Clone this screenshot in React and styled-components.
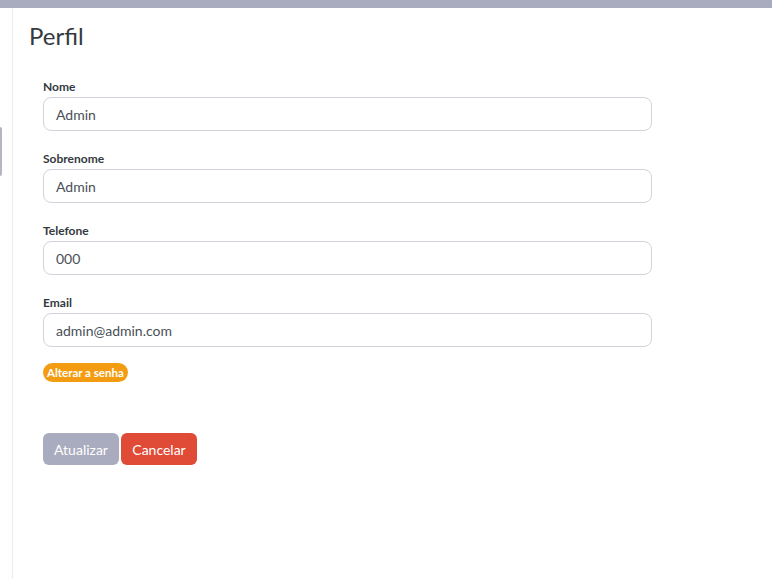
import React from "react";
import styled, { createGlobalStyle } from "styled-components";

const GlobalStyle = createGlobalStyle`
  html, body { margin: 0; padding: 0; background: #fff; }
  body { font-family: Lato, "Open Sans", sans-serif; color: #343a40; }
`;

const Page = styled.div`
  display: flex;
  flex-direction: column;
  width: 772px;
  height: 579px;
  overflow: hidden;
`;

const TopBar = styled.div`
  height: 8px;
  background: #a9abbe;
  flex-shrink: 0;
`;

const Body = styled.div`
  display: flex;
  flex: 1;
`;

const Sidebar = styled.aside`
  position: relative;
  width: 12px;
  border-right: 1px solid #ececec;
  flex-shrink: 0;
`;

const SideTab = styled.div`
  position: absolute;
  left: 0;
  top: 119px;
  width: 2px;
  height: 49px;
  background: #b4b5c4;
  border-radius: 0 2px 2px 0;
`;

const Content = styled.main`
  flex: 1;
  padding: 13px 16px 0 16px;
`;

const Title = styled.h1`
  margin: 0 0 28px 0;
  font-size: 24px;
  font-weight: 400;
  color: #343a40;
  line-height: 30px;
`;

const Form = styled.form`
  display: flex;
  flex-direction: column;
  padding-left: 14px;
  width: 609px;
`;

const Field = styled.div`
  display: flex;
  flex-direction: column;
  margin-bottom: ${(p) => (p.$last ? "16px" : "20px")};
`;

const Label = styled.label`
  font-size: 12px;
  font-weight: 700;
  color: #343a40;
  margin-bottom: 3px;
  line-height: 15px;
`;

const Input = styled.input`
  box-sizing: border-box;
  height: 34px;
  border: 1px solid #ced4da;
  border-radius: 8px;
  padding: 0 12px;
  font-family: Lato, "Open Sans", sans-serif;
  font-size: 14px;
  color: #495057;
  outline: none;
`;

const Badge = styled.button`
  align-self: flex-start;
  border: none;
  border-radius: 10px;
  background: #f39c12;
  color: #fff;
  font-family: Lato, "Open Sans", sans-serif;
  font-size: 11.5px;
  font-weight: 700;
  height: 19px;
  padding: 0 4px;
  line-height: 19px;
  cursor: pointer;
`;

const Actions = styled.div`
  display: flex;
  gap: 2px;
  margin-top: 51px;
`;

const Button = styled.button`
  box-sizing: border-box;
  width: 76px;
  height: 32px;
  border: none;
  border-radius: 6px;
  background: ${(p) => (p.$variant === "danger" ? "#e04b38" : "#a9abbe")};
  color: #fff;
  font-family: Lato, "Open Sans", sans-serif;
  font-size: 14px;
  cursor: pointer;
`;

const fields = [
  { label: "Nome", value: "Admin" },
  { label: "Sobrenome", value: "Admin" },
  { label: "Telefone", value: "000" },
  { label: "Email", value: "admin@admin.com" },
];

export default function App() {
  return (
    <>
      <GlobalStyle />
      <Page>
        <TopBar />
        <Body>
          <Sidebar>
            <SideTab />
          </Sidebar>
          <Content>
            <Title>Perfil</Title>
            <Form onSubmit={(e) => e.preventDefault()}>
              {fields.map((f, i) => (
                <Field key={f.label} $last={i === fields.length - 1}>
                  <Label>{f.label}</Label>
                  <Input defaultValue={f.value} />
                </Field>
              ))}
              <Badge type="button">Alterar a senha</Badge>
              <Actions>
                <Button type="submit">Atualizar</Button>
                <Button type="button" $variant="danger">
                  Cancelar
                </Button>
              </Actions>
            </Form>
          </Content>
        </Body>
      </Page>
    </>
  );
}
